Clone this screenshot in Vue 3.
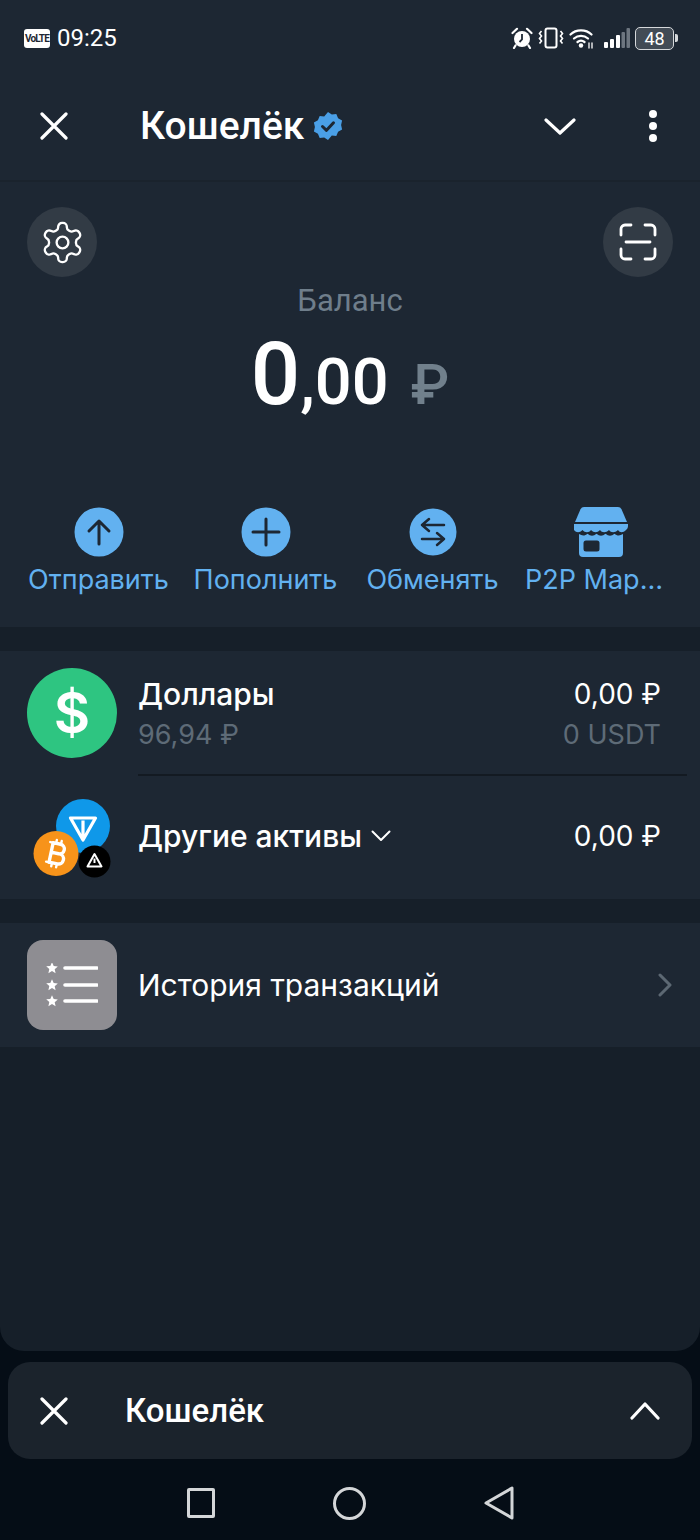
<script setup>
const actions = [
  { key: 'send', label: 'Отправить' },
  { key: 'topup', label: 'Пополнить' },
  { key: 'swap', label: 'Обменять' },
  { key: 'p2p', label: 'P2P Маркет' }
]

// y of each star + line in the history icon
const historyLines = [5, 22, 38]
</script>

<template>
  <div class="screen">
    <div class="sheet">
      <div class="top">
        <div class="status">
          <div class="status-left">
            <span class="volte">VoLTE</span>
            <span class="clock">09:25</span>
          </div>
          <div class="status-right">
            <svg width="22" height="22" viewBox="0 0 22 22" fill="none">
              <circle cx="11" cy="12" r="8" fill="#fff" />
              <path d="M11 7v5.5l-2.5 2.5" stroke="#1d2733" stroke-width="1.8" />
              <path d="M1.5 6 6 1.8M20.5 6 16 1.8M4.5 18.5 3 21M17.5 18.5 19 21" stroke="#fff" stroke-width="2.2" stroke-linecap="round" />
            </svg>
            <svg width="26" height="22" viewBox="0 0 26 22" fill="none" stroke="#fff" stroke-width="1.6">
              <rect x="7.5" y="1.5" width="11" height="19" rx="2" stroke-width="2" />
              <path d="M3.5 4 1.5 6.5l2 2.5-2 2.5 2 2.5-2 2.5M22.5 4l2 2.5-2 2.5 2 2.5-2 2.5 2 2.5" />
            </svg>
            <svg width="26" height="22" viewBox="0 0 26 22" fill="none" stroke="#fff" stroke-width="2.2" stroke-linecap="round">
              <path d="M1.5 7.5C7 2 17 2 22.5 7.5M5 11.5c4-3.5 10-3.5 14 0M8.5 15c2-1.5 5-1.5 7 0" />
              <circle cx="12" cy="18.5" r="2.2" fill="#fff" stroke="none" />
              <path d="M20 16v5M23 16v5" stroke-width="1.3" />
            </svg>
            <svg class="signal" width="26" height="20" viewBox="0 0 26 20">
              <rect x="0" y="14" width="4" height="6" rx="1" fill="#fff" />
              <rect x="6" y="11" width="4" height="9" rx="1" fill="#fff" />
              <rect x="12" y="7" width="4" height="13" rx="1" fill="#fff" />
              <rect x="17.5" y="4" width="3.5" height="16" rx="1" fill="#6d7680" />
              <rect x="22.5" y="0" width="3.5" height="20" rx="1" fill="#6d7680" />
            </svg>
            <div class="battery">
              <div class="battery-body">48</div>
              <div class="battery-tip"></div>
            </div>
          </div>
        </div>

        <header class="header">
          <svg class="close-icon" width="28" height="28" viewBox="0 0 28 28" fill="none" stroke="#fff" stroke-width="3.2" stroke-linecap="round">
            <path d="M2 2l24 24M26 2 2 26" />
          </svg>
          <div class="title">
            <span>Кошелёк</span>
            <svg width="30" height="30" viewBox="0 0 30 30">
              <path d="M15 1l3.8 2.6 4.5-.5 1.8 4.2 4 2.2-1 4.5 1 4.5-4 2.2-1.8 4.2-4.5-.5L15 29l-3.8-2.6-4.5.5-1.8-4.2-4-2.2 1-4.5-1-4.500 4-2.200 1.800-4.200 4.500.5z" fill="#4a9fe6" />
              <path d="M9.5 15.5l4 3.8 7-7.500" fill="none" stroke="#1d2733" stroke-width="3" stroke-linecap="round" stroke-linejoin="round" />
            </svg>
          </div>
          <svg class="chevron" width="32" height="20" viewBox="0 0 32 20" fill="none" stroke="#fff" stroke-width="3.2" stroke-linecap="round" stroke-linejoin="round">
            <path d="M2 3l14 13L30 3" />
          </svg>
          <div class="dots"><i></i><i></i><i></i></div>
        </header>
      </div>

      <section class="balance">
        <div class="balance-tools">
          <button class="round-btn" type="button">
            <svg width="47" height="47" viewBox="0 0 24 24" fill="none" stroke="#fff" stroke-width="1.2" stroke-linejoin="round">
              <path d="M12.22 2h-.44a2 2 0 0 0-2 2v.18a2 2 0 0 1-1 1.73l-.43.25a2 2 0 0 1-2 0l-.15-.08a2 2 0 0 0-2.73.73l-.22.38a2 2 0 0 0 .73 2.73l.15.1a2 2 0 0 1 1 1.72v.51a2 2 0 0 1-1 1.74l-.15.09a2 2 0 0 0-.73 2.73l.22.38a2 2 0 0 0 2.73.73l.15-.08a2 2 0 0 1 2 0l.43.25a2 2 0 0 1 1 1.73V20a2 2 0 0 0 2 2h.44a2 2 0 0 0 2-2v-.18a2 2 0 0 1 1-1.73l.43-.25a2 2 0 0 1 2 0l.15.08a2 2 0 0 0 2.73-.73l.22-.39a2 2 0 0 0-.73-2.73l-.15-.08a2 2 0 0 1-1-1.74v-.5a2 2 0 0 1 1-1.74l.15-.09a2 2 0 0 0 .73-2.73l-.22-.38a2 2 0 0 0-2.73-.73l-.15.08a2 2 0 0 1-2 0l-.43-.25a2 2 0 0 1-1-1.73V4a2 2 0 0 0-2-2z" />
              <circle cx="12" cy="12" r="3" />
            </svg>
          </button>
          <button class="round-btn" type="button">
            <svg width="38" height="38" viewBox="0 0 38 38" fill="none" stroke="#fff" stroke-width="2.8" stroke-linecap="round">
              <path d="M2 12V6a4 4 0 0 1 4-4h6M26 2h6a4 4 0 0 1 4 4v6M2 26v6a4 4 0 0 0 4 4h6M26 36h6a4 4 0 0 0 4-4v-6M7 19h24" />
            </svg>
          </button>
        </div>
        <div class="balance-label">Баланс</div>
        <div class="amount">
          <span class="amount-int">0</span><span class="amount-frac">,00</span><span class="amount-cur">₽</span>
        </div>
        <div class="actions">
          <div v-for="a in actions" :key="a.key" class="action">
            <div class="action-icon" :class="{ 'action-icon-shop': a.key === 'p2p' }">
              <svg v-if="a.key === 'send'" width="50" height="50" viewBox="0 0 50 50">
                <circle cx="25" cy="25" r="24.5" fill="#62b1f0" />
                <path d="M25 37V14M15 24l10-10 10 10" fill="none" stroke="#1d2733" stroke-width="3" stroke-linecap="round" stroke-linejoin="round" />
              </svg>
              <svg v-else-if="a.key === 'topup'" width="50" height="50" viewBox="0 0 50 50">
                <circle cx="25" cy="25" r="24.5" fill="#62b1f0" />
                <path d="M25 12v26M12 25h26" fill="none" stroke="#1d2733" stroke-width="3" stroke-linecap="round" />
              </svg>
              <svg v-else-if="a.key === 'swap'" width="48" height="48" viewBox="0 0 48 48">
                <circle cx="24" cy="24" r="23.5" fill="#62b1f0" />
                <path d="M35 17H13M20 11l-7 6 7 6M13 31h22M28 25l7 6-7 6" fill="none" stroke="#1d2733" stroke-width="2.5" stroke-linecap="round" stroke-linejoin="round" />
              </svg>
              <svg v-else width="54" height="50" viewBox="0 0 54 50">
                <path d="M10 0h34a4 4 0 0 1 3.5 2.2L53 15H1L6.5 2.2A4 4 0 0 1 10 0z" fill="#62b1f0" />
                <path d="M0 17h54v2c0 2-1 3-2 4-3 3-6 3-8 0-3 3-7 3-9 0-3 3-7 3-9 0-3 3-6 3-9 0-2 3-6 3-8.500 0-3 3-6 3-8.500 0-1-1-1.500-2-1.500-4z" fill="#62b1f0" />
                <path d="M5 27c3 2 6 2 8.500-.3 3 2.600 6 2.600 9 0 3 2.600 6 2.600 9 0 3 2.600 6 2.600 9 0 2.500 2.300 5.500 2.300 8.500.3V46a4 4 0 0 1-4 4H9a4 4 0 0 1-4-4z" fill="#62b1f0" />
                <rect x="9.5" y="33.500" width="16" height="11" rx="2.5" fill="#1d2733" />
              </svg>
            </div>
            <div class="action-label">{{ a.label }}</div>
          </div>
        </div>
      </section>

      <section class="card assets">
        <div class="row row-usd">
          <div class="coin-usd">$</div>
          <div class="row-body">
            <div class="row-main">
              <div>
                <div class="name">Доллары</div>
                <div class="sub">96,94 ₽</div>
              </div>
              <div class="right">
                <div class="value">0,00 ₽</div>
                <div class="sub">0 USDT</div>
              </div>
            </div>
          </div>
        </div>
        <div class="row row-other">
          <div class="coins">
            <svg width="90" height="90" viewBox="0 0 90 90">
              <circle cx="56" cy="27" r="27" fill="#0f98e9" />
              <path d="M43.5 19h25L56 41z M56 21.5V38" fill="none" stroke="#fff" stroke-width="3.2" stroke-linejoin="round" />
              <circle cx="29" cy="54.5" r="22.5" fill="#f7931a" />
              <circle cx="67.5" cy="62.5" r="16" fill="#000" />
              <path d="M67.5 55l7 12.5h-14z" fill="none" stroke="#fff" stroke-width="2" stroke-linejoin="round" />
              <path d="M67.5 59.5v4.5" stroke="#fff" stroke-width="2" />
              <g transform="rotate(12 29 54.5)" fill="none" stroke="#fff" stroke-width="3.4" stroke-linejoin="round" stroke-linecap="round">
                <path d="M24 44.5h7.5a4.7 4.7 0 0 1 0 9.700H24M24 54.200h8.500a5 5 0 0 1 0 10.200H24zM24 44.500v20" />
                <path d="M27 41v3M32 41v3M27 65v3M32 65v3M21 44.500h3M21 64.500h3" stroke-width="2.4" />
              </g>
            </svg>
          </div>
          <div class="row-main other-main">
            <div class="name name-drop">
              Другие активы
              <svg width="20" height="12" viewBox="0 0 20 12" fill="none" stroke="#fff" stroke-width="2" stroke-linecap="round" stroke-linejoin="round">
                <path d="M1.5 1.5 10 10l8.500-8.500" />
              </svg>
            </div>
            <div class="value">0,00 ₽</div>
          </div>
        </div>
      </section>

      <section class="card history">
        <div class="history-icon">
          <svg width="52" height="44" viewBox="0 0 52 44">
            <g v-for="y in historyLines" :key="y">
              <path d="M0-5.800l1.700 3.800 4.100.4-3.100 2.800.9 4.100L0 3.100l-3.600 2.100.9-4.100-3.100-2.800 4.100-.4z" fill="#fff" :transform="`translate(6 ${y})`" />
              <path d="M19 0h32" stroke="#fff" stroke-width="3.6" stroke-linecap="round" :transform="`translate(0 ${y})`" />
            </g>
          </svg>
        </div>
        <div class="history-label">История транзакций</div>
        <svg class="history-arrow" width="14" height="24" viewBox="0 0 14 24" fill="none" stroke="#5c6873" stroke-width="3" stroke-linecap="round" stroke-linejoin="round">
          <path d="M2 2l10 10L2 22" />
        </svg>
      </section>
    </div>

    <div class="mini-bar">
      <svg width="28" height="28" viewBox="0 0 28 28" fill="none" stroke="#fff" stroke-width="3.2" stroke-linecap="round">
        <path d="M2 2l24 24M26 2 2 26" />
      </svg>
      <div class="mini-title">Кошелёк</div>
      <svg width="30" height="20" viewBox="0 0 30 20" fill="none" stroke="#fff" stroke-width="3.2" stroke-linecap="round" stroke-linejoin="round">
        <path d="M2 17 15 3l13 14" />
      </svg>
    </div>

    <nav class="nav">
      <span class="nav-square"></span>
      <span class="nav-circle"></span>
      <svg width="30" height="34" viewBox="0 0 30 34" fill="none" stroke="#d4d6d8" stroke-width="3" stroke-linejoin="round">
        <path d="M28 2v30L2 17z" />
      </svg>
    </nav>
  </div>
</template>

<style>
html,
body {
  margin: 0;
  background: #050d16;
}
</style>

<style scoped>
.screen {
  width: 700px;
  height: 1540px;
  display: flex;
  flex-direction: column;
  background: #050d16;
  font-family: Roboto, "Noto Sans", "DejaVu Sans", sans-serif;
  color: #fff;
  overflow: hidden;
}

.sheet {
  height: 1351px;
  flex: none;
  background: #161f29;
  border-radius: 0 0 24px 24px;
  overflow: hidden;
}

.top {
  height: 180px;
  background: #1d2733;
  box-sizing: border-box;
  padding-top: 22px;
}

.status {
  height: 32px;
  display: flex;
  justify-content: space-between;
  align-items: center;
  padding: 0 22px 0 24px;
}

.status-left {
  display: flex;
  align-items: center;
  gap: 7px;
}

.volte {
  width: 26px;
  height: 19px;
  border-radius: 3px;
  background: #fff;
  color: #1d2733;
  font-size: 10px;
  font-weight: 700;
  line-height: 19px;
  text-align: center;
  letter-spacing: -0.8px;
}

.clock {
  font-size: 24px;
}

.status-right {
  display: flex;
  align-items: center;
  gap: 5px;
}

.signal {
  margin-left: 4px;
}

.battery {
  display: flex;
  align-items: center;
  gap: 1px;
}

.battery-body {
  width: 37px;
  height: 21px;
  border: 1.5px solid #d5d8db;
  border-radius: 5px;
  background: #424b55;
  font-size: 18px;
  line-height: 21px;
  text-align: center;
}

.battery-tip {
  width: 3px;
  height: 8px;
  background: #d5d8db;
  border-radius: 0 2px 2px 0;
}

.header {
  display: flex;
  align-items: center;
  height: 50px;
  margin-top: 47px;
  padding: 0 43px 0 40px;
}

.close-icon {
  flex: none;
}

.title {
  display: flex;
  align-items: center;
  gap: 9px;
  margin-left: 72px;
  flex: 1;
  font-size: 39px;
  font-weight: 500;
}

.chevron {
  margin-right: 73px;
  margin-top: 2px;
}

.dots {
  display: flex;
  flex-direction: column;
  gap: 4px;
}

.dots i {
  width: 8px;
  height: 8px;
  border-radius: 50%;
  background: #fff;
}

.balance {
  height: 447px;
  box-sizing: border-box;
  background: #1d2733;
  border-top: 2px solid #1a232d;
  padding: 25px 27px 0;
}

.balance-tools {
  display: flex;
  justify-content: space-between;
}

.round-btn {
  width: 70px;
  height: 70px;
  padding: 0;
  border: 0;
  border-radius: 50%;
  background: #323b45;
  display: flex;
  align-items: center;
  justify-content: center;
}

.balance-label {
  margin-top: 6px;
  text-align: center;
  font-size: 31px;
  line-height: 36px;
  color: #6f7e8b;
}

.amount {
  display: flex;
  justify-content: center;
  align-items: baseline;
  height: 100px;
  margin-top: 5px;
  line-height: 100px;
}

.amount-int {
  font-size: 87px;
  font-weight: 500;
}

.amount-frac {
  font-size: 65px;
  font-weight: 500;
}

.amount-cur {
  margin-left: 22px;
  font-size: 56px;
  font-weight: 500;
  color: #71808c;
}

.actions {
  display: grid;
  grid-template-columns: 167px 167px 167px 156px;
  margin: 83px 0 0 -12px;
}

.action {
  display: flex;
  flex-direction: column;
  align-items: center;
  min-width: 0;
}

.action-icon {
  height: 50px;
  display: flex;
  align-items: center;
}

.action-icon-shop {
  margin-left: 14px;
}

.action-label {
  max-width: 138px;
  margin-top: 7px;
  font-family: Inter, Roboto, sans-serif;
  font-size: 27px;
  line-height: 32px;
  color: #62b1f0;
  white-space: nowrap;
  overflow: hidden;
  text-overflow: ellipsis;
}

.action:nth-child(-n + 3) .action-label {
  max-width: none;
}

.card {
  background: #1d2733;
  margin-top: 24px;
}

.assets {
  height: 248px;
  font-family: Inter, Roboto, sans-serif;
}

.row {
  display: flex;
}

.row-usd {
  height: 124px;
  padding: 17px 0 0 27px;
  box-sizing: border-box;
}

.coin-usd {
  width: 90px;
  height: 90px;
  flex: none;
  border-radius: 50%;
  background: #2ec581;
  font-size: 56px;
  font-weight: 600;
  line-height: 90px;
  text-align: center;
}

.row-body {
  flex: 1;
  margin-left: 21px;
  margin-right: 13px;
  height: 106px;
  border-bottom: 2px solid #131a22;
}

.row-main {
  display: flex;
  justify-content: space-between;
  padding-right: 26px;
}

.name {
  font-size: 30px;
  font-weight: 500;
  line-height: 40px;
  margin-top: 6px;
}

.sub {
  font-size: 27px;
  line-height: 38px;
  margin-top: 2px;
  color: #5e6b77;
}

.right {
  text-align: right;
}

.value {
  font-size: 28px;
  line-height: 40px;
  margin-top: 6px;
}

.row-other {
  height: 124px;
  padding-left: 27px;
  align-items: center;
}

.coins {
  width: 90px;
  height: 90px;
  flex: none;
  margin-top: 14px;
}

.other-main {
  flex: 1;
  margin-left: 21px;
  padding-right: 39px;
  margin-top: -8px;
}

.name-drop {
  display: flex;
  align-items: center;
  gap: 9px;
}

.history {
  height: 124px;
  display: flex;
  align-items: center;
  padding: 0 28px 0 27px;
  font-family: Inter, Roboto, sans-serif;
}

.history-icon {
  width: 90px;
  height: 90px;
  flex: none;
  border-radius: 16px;
  background: #8e8d92;
  display: flex;
  align-items: center;
  justify-content: center;
}

.history-label {
  flex: 1;
  margin-left: 21px;
  font-size: 30px;
}

.mini-bar {
  height: 97px;
  margin: 11px 8px 0;
  border-radius: 22px;
  background: #1b232c;
  display: flex;
  align-items: center;
  padding: 0 32px 0 32px;
}

.mini-title {
  flex: 1;
  margin-left: 57px;
  font-size: 33px;
  font-weight: 500;
}

.nav {
  display: flex;
  justify-content: center;
  align-items: center;
  gap: 118px;
  height: 60px;
  margin-top: 14px;
}

.nav-square {
  width: 28px;
  height: 30px;
  box-sizing: border-box;
  border: 3px solid #d4d6d8;
  border-radius: 2px;
}

.nav-circle {
  width: 33px;
  height: 33px;
  box-sizing: border-box;
  border: 3px solid #d4d6d8;
  border-radius: 50%;
}
</style>
